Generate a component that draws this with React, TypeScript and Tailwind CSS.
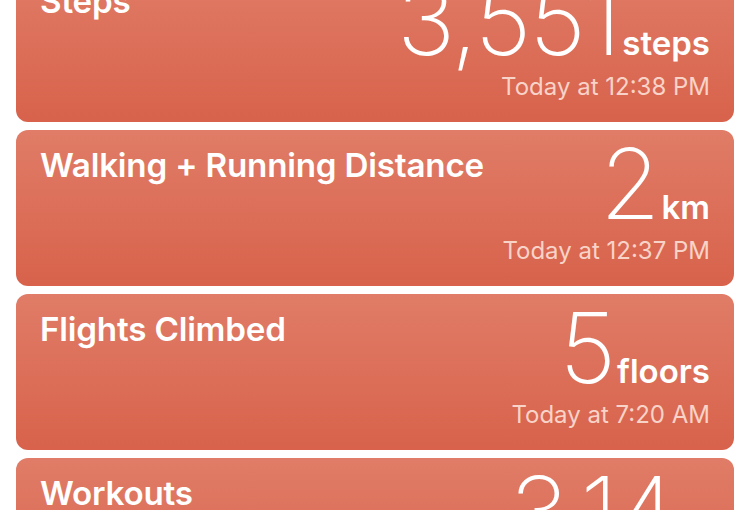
type Part = { value: string; unit: string }

type Metric = {
  title: string
  parts: Part[]
  time: string
}

const metrics: Metric[] = [
  { title: 'Steps', parts: [{ value: '3,551', unit: 'steps' }], time: 'Today at 12:38 PM' },
  {
    title: 'Walking + Running Distance',
    parts: [{ value: '2', unit: 'km' }],
    time: 'Today at 12:37 PM',
  },
  { title: 'Flights Climbed', parts: [{ value: '5', unit: 'floors' }], time: 'Today at 7:20 AM' },
  { title: 'Workouts', parts: [{ value: '3.14', unit: 'hr' }], time: 'Today at 6:05 AM' },
]

function MetricCard({ metric }: { metric: Metric }) {
  return (
    <div className="flex h-[156px] shrink-0 justify-between rounded-[12px] bg-gradient-to-b from-[#e07c67] to-[#d8624b] px-6 text-white">
      <h2 className="pt-[19px] text-[33.2px] font-semibold leading-none tracking-[-0.2px]">
        {metric.title}
      </h2>

      <div className="flex flex-col items-end pt-[5px]">
        <div className="flex items-baseline gap-2 leading-none">
          {metric.parts.map((part) => (
            <span key={part.unit} className="flex items-baseline gap-[3px]">
              <span className="text-[98px] font-extralight tracking-[-2px]">{part.value}</span>
              <span className="text-[33px] font-semibold">{part.unit}</span>
            </span>
          ))}
        </div>
        <p className="mt-[6px] text-[24px] leading-none text-[#f8d3c8]">{metric.time}</p>
      </div>
    </div>
  )
}

export default function App() {
  return (
    <div className="h-[510px] w-[750px] overflow-hidden bg-white font-['Inter',sans-serif]">
      <div className="-mt-[34px] flex flex-col gap-2 px-4">
        {metrics.map((metric) => (
          <MetricCard key={metric.title} metric={metric} />
        ))}
      </div>
    </div>
  )
}
